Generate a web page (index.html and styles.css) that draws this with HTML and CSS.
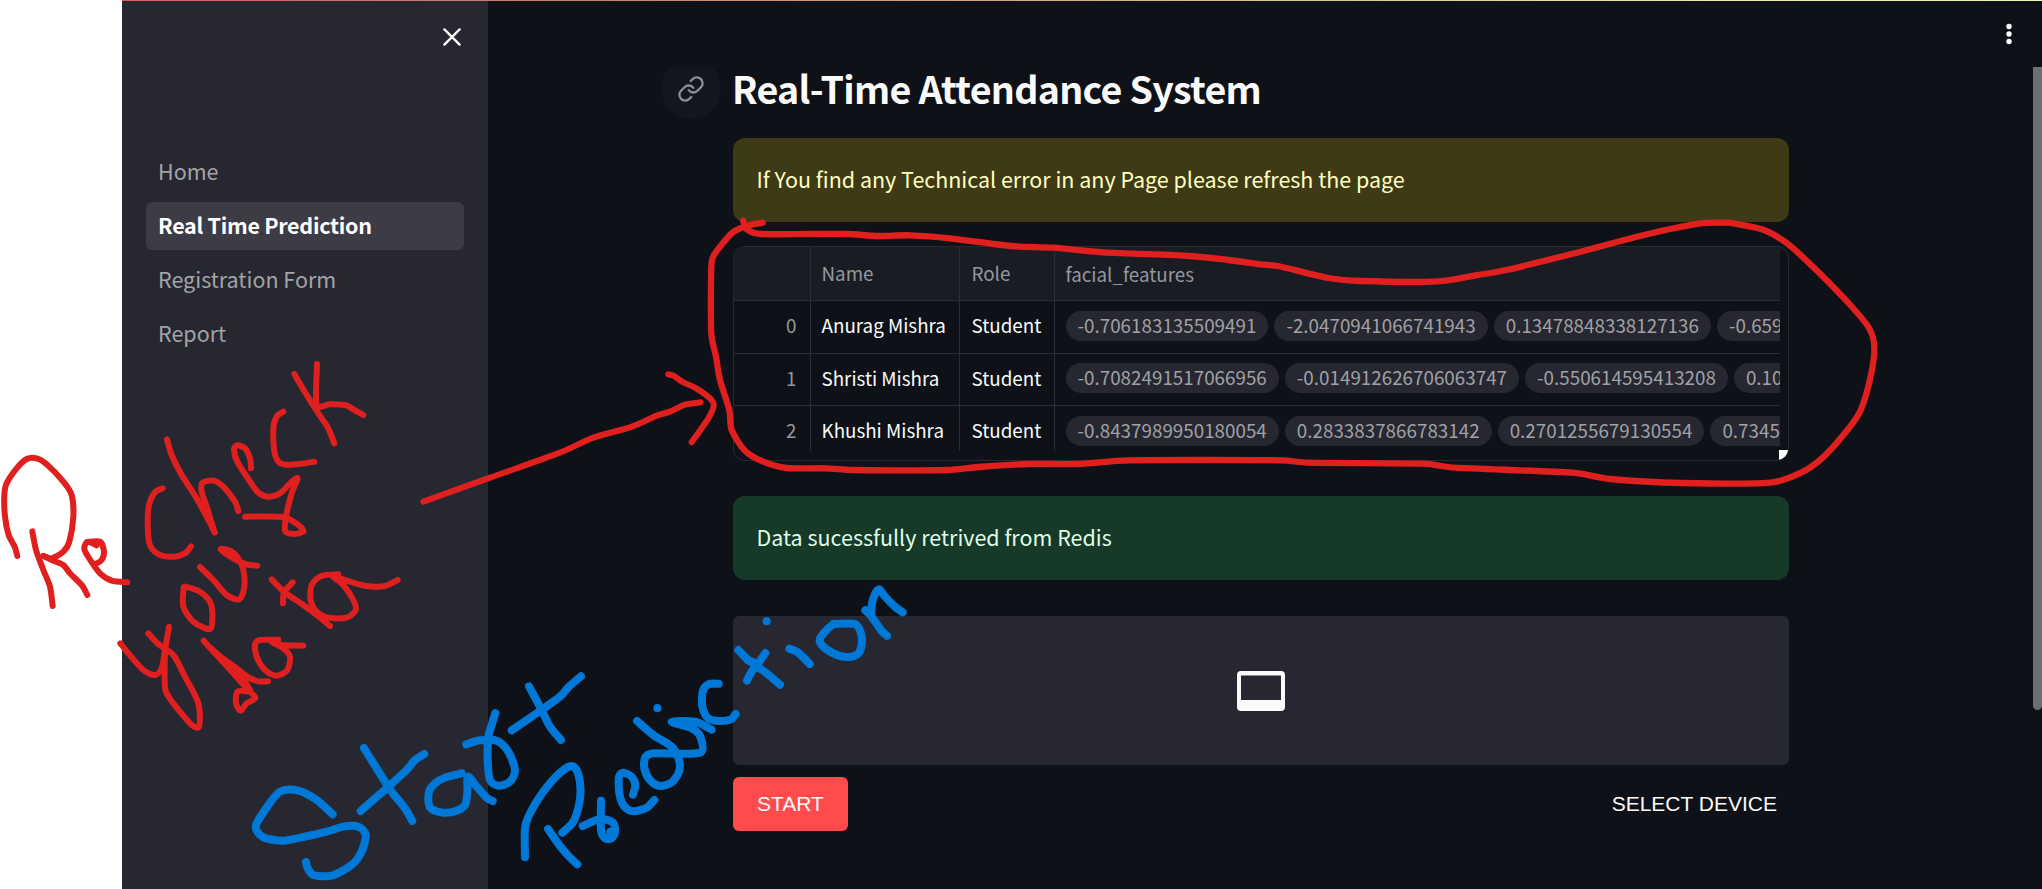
FILE: index.html
```html
<!DOCTYPE html>
<html lang="en">
<head>
<meta charset="utf-8">
<title>Real-Time Attendance System</title>
<link rel="stylesheet" href="styles.css">
</head>
<body>
<div class="page">
  <div class="gutter"></div>
  <div class="app">
    <div class="decoration"></div>
    <aside class="sidebar">
      <div class="sidebar-head">
        <svg class="close" viewBox="0 0 18 18"><path d="M1.4 1.4 16.6 16.6M16.6 1.4 1.4 16.6"/></svg>
      </div>
      <nav class="nav">
        <a class="nav-item">Home</a>
        <a class="nav-item active">Real Time Prediction</a>
        <a class="nav-item">Registration Form</a>
        <a class="nav-item">Report</a>
      </nav>
    </aside>
    <main class="main">
      <header class="topbar">
        <svg class="menu" viewBox="0 0 8 22"><circle cx="4" cy="3.5" r="2.7"/><circle cx="4" cy="11" r="2.7"/><circle cx="4" cy="18.5" r="2.7"/></svg>
      </header>
      <div class="scroll">
        <div class="content">
          <div class="title-row">
            <span class="anchor"><svg viewBox="0 0 24 24"><path d="M10 13a5 5 0 0 0 7.54.54l3-3a5 5 0 0 0-7.07-7.07l-1.72 1.71"/><path d="M14 11a5 5 0 0 0-7.54-.54l-3 3a5 5 0 0 0 7.07 7.07l1.71-1.71"/></svg></span>
            <h1 class="title">Real-Time Attendance System</h1>
          </div>
          <div class="alert warning"><span class="alert-text">If You find any Technical error in any Page please refresh the page</span></div>
          <div class="frame">
            <div class="grid">
              <div class="row head"><span class="idx"></span><span class="name">Name</span><span class="role">Role</span><span class="feat">facial_features</span></div>
              <div class="row"><span class="idx">0</span><span class="name">Anurag Mishra</span><span class="role">Student</span><span class="feat"><b class="pill">-0.706183135509491</b><b class="pill">-2.0470941066741943</b><b class="pill">0.13478848338127136</b><b class="pill">-0.659</b></span></div>
              <div class="row"><span class="idx">1</span><span class="name">Shristi Mishra</span><span class="role">Student</span><span class="feat"><b class="pill">-0.7082491517066956</b><b class="pill">-0.014912626706063747</b><b class="pill">-0.550614595413208</b><b class="pill">0.10</b></span></div>
              <div class="row last"><span class="idx">2</span><span class="name">Khushi Mishra</span><span class="role">Student</span><span class="feat"><b class="pill">-0.8437989950180054</b><b class="pill">0.2833837866783142</b><b class="pill">0.2701255679130554</b><b class="pill">0.7345</b></span></div>
            </div>
            <span class="corner"></span>
          </div>
          <div class="alert success"><span class="alert-text">Data sucessfully retrived from Redis</span></div>
          <div class="video">
            <svg class="screen" viewBox="0 0 48 40"><path fill-rule="evenodd" d="M4 0H44a4 4 0 0 1 4 4V36a4 4 0 0 1-4 4H4a4 4 0 0 1-4-4V4a4 4 0 0 1 4-4ZM4 4.5V29H44V4.5Z"/></svg>
          </div>
          <div class="actions">
            <button class="btn start">START</button>
            <button class="btn device">SELECT DEVICE</button>
          </div>
        </div>
        <div class="thumb"></div>
      </div>
    </main>
  </div>
  <svg class="ink" viewBox="0 0 2042 889">
    <g class="red lasso">
      <path data-p="743.3,220.7 746.7,229.3 760,234 810,234 846.4,234 878.6,236 910.7,235.3 950,238.3 1010.7,246 1053.6,247.7 1103.6,252.3 1189.3,256 1228.6,260 1260,264.3 1277.9,266 1328.4,278 1362,281 1437.8,281.3 1475.7,275.3 1505.2,270.3 1576.7,252.7 1644,235 1698.8,223.7 1724,222.7 1736.6,224 1764,230 1787,243.3 1814.5,268.3 1850.3,305 1869.2,328.3 1874.3,346.7 1871.3,373.3 1860.8,410 1846,431.7 1823,457.3 1801,472.7 1770.3,482.7 1682,483 1610.4,479 1572.5,472.7 1454.6,467.7 1423,463.7 1307.3,462.7 1282,460.3 1128.6,460.3 1078.6,464 1028.6,464 978.6,467 946.4,470 853.6,470 825,468.3 786.7,468 763.3,461.7 745,450.7 731.7,430 729.3,410 720,380 716,356.7 711.3,333.3 711.3,266.7 714,255 731.7,233.3 746.7,226 762.7,222.7"/>
    </g>
    <g class="red" transform="translate(410 210) scale(.33333)">
      <path data-p="40,875 240,803 450,728 550,683 660,652 740,617 780,605 825,584 872,577"/>
      <path data-p="775,493 790,497 820,517 860,536 903,568 911,588 895,625 845,697"/>
    </g>
    <g class="red" transform="translate(0 340) scale(.33333)">
      <path data-p="52,648 44,620 26,585 15,530 13,465 20,430 50,385 80,357 110,355 140,373 190,425 215,465 220,530 208,605 190,635 155,655 130,648"/>
      <path data-p="97,574 108,630 130,690 150,740 158,798"/>
      <path data-p="130,648 160,662 190,675 210,700 245,735 262,765"/>
      <path data-p="290,616 262,606 253,628 272,662 300,700 335,722 382,727"/>
      <path data-p="262,606 300,605 312,635 305,660 290,670"/>
      <path data-p="488,445 465,457 446,500 444,580 452,620 480,645 525,650 555,640 573,619"/>
      <path data-p="501,298 515,345 545,405 590,475 620,530 644,577"/>
      <path data-p="644,577 620,500 605,455 608,428 640,422 670,440 705,485 715,513"/>
      <path data-p="753,385 750,355 735,325 712,316 702,328 712,365 750,425 775,458 805,470 840,460 875,425 893,415 875,460 860,520 855,572 880,582 910,575 895,555 850,531 735,530"/>
      <path data-p="850,215 830,230 820,265 823,335 835,365 855,374 900,372 943,365"/>
      <path data-p="883,102 920,165 965,235 985,265 1003,310"/>
      <path data-p="951,72 950,195 990,193 1035,195 1060,208 1090,225"/>
      <path data-p="361,910 385,940 430,990 465,1005 485,985 495,930 507,860"/>
      <path data-p="445,880 475,912 520,945 555,1010 595,1090 597,1160 570,1150 500,1060 494,1000 495,930"/>
      <path data-p="551,742 550,800 580,845 628,868 637,840 632,790 600,755 555,740"/>
      <path data-p="600,681 640,720 680,765 718,778 733,740 730,690 715,655 690,632 662,628 700,655 740,673 772,677"/>
      <path data-p="611,902 650,945 700,1000 745,1050 766,1074 740,1090 722,1112 708,1090 713,1055 750,1055"/>
      <path data-p="640,935 700,978 745,1012 775,1024 804,1024"/>
      <path data-p="625,918 680,968 725,1010 750,1050"/>
      <path data-p="835,899 780,900 765,912 770,950 795,990 830,1007 862,990 870,950 850,925 815,906 845,915 910,917"/>
      <path data-p="815,718 855,758 910,795 950,825 990,858"/>
      <path data-p="849,790 852,757 878,727"/>
      <path data-p="1015,703 965,707 935,735 932,780 950,815 985,833 1040,833 1067,810 1060,780 1030,735 1000,710 1050,725 1100,738 1155,738 1193,720"/>
    </g>
    <g class="blue" transform="translate(230 560) scale(.33333)">
      <path data-p="308,763 260,720 205,692 150,695 105,750 77,800 100,832 160,842 215,832 290,815 340,800 385,800 407,825 395,875 365,915 305,947 250,945 233,925 228,906"/>
      <path data-p="402,564 440,625 485,695 525,745 547,783"/>
      <path data-p="392,753 475,680 530,630 555,600 583,582"/>
      <path data-p="695,640 640,655 605,680 595,710 602,745 640,758 680,752 705,735 712,700 714,650 740,680 770,713 788,723"/>
      <path data-p="709,553 750,541 800,542 835,575 855,630 840,665 805,677 780,660 773,600 775,530 785,495 796,459"/>
      <path data-p="897,379 935,450 960,500 993,540"/>
      <path data-p="845,511 930,453 990,410 1015,382 1053,349"/>
    </g>
    <g class="blue" transform="translate(500 570) scale(.33333)">
      <path data-p="75,862 75,775 90,730 130,665 180,608 215,588 232,605 241,650 238,700 220,755 187,788"/>
      <path data-p="144,777 180,828 205,857 232,883"/>
      <path data-p="248,768 300,747 338,757 345,785 335,805 315,805 303,780 303,692"/>
      <path data-p="331,787 331,785"/>
      <path data-p="399,674 406,645 395,620 370,608 357,620 358,670 372,708 400,724 440,713 463,690"/>
      <path data-p="411,453 460,495 515,530 537,570 537,605 515,637 480,648 450,630 433,595 436,562 460,550 600,548 601,500 575,475 515,455 585,455 635,479"/>
      <path data-p="472,414 472,415"/>
      <path data-p="656,341 625,343 608,365 607,410 625,445 660,453 693,448 707,432"/>
      <path data-p="715,240 745,270 800,310 840,344"/>
      <path data-p="796,249 775,280 755,305 741,332"/>
      <path data-p="745,272 760,276"/>
      <path data-p="800,153 800,154"/>
      <path data-p="868,236 890,245 915,267 929,282"/>
      <path data-p="1000,162 1065,162 1083,190 1085,225 1072,253 1040,261 1000,250 965,225 960,205 980,180 1000,162"/>
      <path data-p="1096,121 1115,140 1145,183 1161,197"/>
      <path data-p="1114,135 1116,100 1126,70 1138,58 1155,80 1185,110 1208,127"/>
    </g>
  </svg>
</div>
<script src="ink.js"></script>
</body>
</html>
```
FILE: styles.css
```css
* { box-sizing: border-box; }
body { margin: 0; background: #fff; font-family: "Noto Sans CJK SC", "Noto Sans", sans-serif; }
.page { position: relative; display: flex; width: 2042px; height: 889px; overflow: hidden; }
.gutter { width: 122px; flex: none; background: #fff; }
.app { position: relative; display: flex; flex: 1; background: #0e1117; }
.decoration { position: absolute; top: 0; left: 0; right: 0; height: 1px; background: linear-gradient(90deg, #d2626a, #c98a70 30%, #e8e8a0 80%, #f4f6b8); }
.sidebar { width: 366px; flex: none; background: #262730; }
.sidebar-head { display: flex; justify-content: flex-end; height: 148px; padding: 28px 27px 0 0; }
.close { width: 18px; height: 18px; fill: none; stroke: #fafafa; stroke-width: 2.4; stroke-linecap: round; }
.nav { display: flex; flex-direction: column; gap: 6px; padding: 0 24px; }
.nav-item { height: 48px; padding: 0 12px; border-radius: 6px; font-size: 21.5px; line-height: 45px; color: #a3a4a8; white-space: nowrap; }
.nav-item.active { background: #3c3b46; color: #fff; font-weight: 700; letter-spacing: -0.28px; }
.main { display: flex; flex-direction: column; flex: 1; min-width: 0; }
.topbar { display: flex; justify-content: flex-end; flex: none; height: 67px; padding: 23px 29px 0 0; }
.menu { width: 8px; height: 22px; fill: #fff; }
.scroll { display: flex; justify-content: space-between; flex: 1; overflow: hidden; }
.content { width: 1056px; margin-left: 245px; }
.thumb { width: 9px; height: 643px; background: #6d6e72; border-radius: 0 0 5px 5px; }
.title-row { position: relative; height: 71px; }
.anchor { position: absolute; left: -72px; top: -8px; display: flex; align-items: center; justify-content: center; width: 60px; height: 60px; border-radius: 50%; background: #12161e; }
.anchor svg { width: 28px; height: 28px; fill: none; stroke: #8e9096; stroke-width: 2; stroke-linecap: round; stroke-linejoin: round; }
.title { margin: 0 0 0 -1px; font-size: 37.6px; line-height: 42px; font-weight: 700; letter-spacing: -0.72px; color: #fafafa; white-space: nowrap; }
.alert { display: flex; height: 84px; padding: 0 23.5px; border-radius: 12px; font-size: 21.48px; line-height: 81px; white-space: nowrap; }
.warning { margin-bottom: 24px; background: #3e3a16; color: #ffffc2; }
.success { margin-bottom: 36px; background: #173928; color: #dffde9; }
.frame { position: relative; height: 215px; margin-bottom: 35px; border: 1px solid #26292f; border-radius: 12px; overflow: hidden; }
.grid { width: 1046px; height: 204px; overflow: hidden; font-size: 18.8px; }
.row { display: flex; height: 52.5px; border-bottom: 1.5px solid #2c2e35; line-height: 48px; color: #fafafa; white-space: nowrap; }
.row.head { height: 54px; background: #1a1c24; line-height: 51px; }
.row.head span { color: #96979b; }
.row.last { border-bottom: 0; }
.idx { width: 76.5px; flex: none; padding-right: 13px; border-right: 1.5px solid #2c2e35; text-align: right; color: #96979b; }
.name { width: 149.5px; flex: none; padding-left: 11px; border-right: 1.5px solid #2c2e35; }
.role { width: 95px; flex: none; padding-left: 11.5px; border-right: 1.5px solid #2c2e35; }
.feat { display: flex; align-items: center; gap: 6px; padding-left: 10.5px; }
.row:not(.head) .feat { height: 49px; }
.pill { flex: none; height: 30px; padding: 0 12px; border-radius: 15px; background: #262730; color: #a0a1a5; font-weight: 400; line-height: 28px; letter-spacing: 0.02px; }
.corner { position: absolute; right: 0; bottom: 0; width: 9px; height: 10px; background: #fff; }
.video { display: flex; align-items: center; justify-content: center; height: 149px; margin-bottom: 12px; border-radius: 6px; background: #262730; }
.screen { width: 48px; height: 40px; fill: #fafafa; }
.actions { display: flex; justify-content: space-between; height: 54px; }
.btn { height: 54px; padding: 0; border: 0; border-radius: 6px; font: 21px/54px "Liberation Sans", Arial, sans-serif; color: #fafafa; white-space: nowrap; }
.start { width: 115px; background: #ff4b4b; }
.device { padding-right: 12px; background: none; }
.ink { position: absolute; left: 0; top: 0; width: 2042px; height: 889px; fill: none; stroke-linecap: round; stroke-linejoin: round; }
.red { stroke: #e01f1f; stroke-width: 18; }
.red.lasso { stroke-width: 6.3; }
.blue { stroke: #0078d7; stroke-width: 24; }
```
FILE: ink.js
```javascript
// Turns each stroke's sampled points into a smooth cubic path.
document.querySelectorAll('.ink path').forEach(function (path) {
  var p = path.dataset.p.split(' ').map(function (s) { return s.split(',').map(Number); });
  var k = 7, d = 'M' + p[0];
  for (var i = 0; i < p.length - 1; i++) {
    var a = p[i - 1] || p[i], b = p[i], c = p[i + 1], e = p[i + 2] || c;
    // handles are capped by the segment length so uneven sampling does not overshoot
    var seg = Math.hypot(c[0] - b[0], c[1] - b[1]);
    var h = function (u, v) {
      var x = (v[0] - u[0]) / k, y = (v[1] - u[1]) / k, l = Math.hypot(x, y) || 1;
      var s = Math.min(1, seg * 0.35 / l);
      return [x * s, y * s];
    };
    var m = h(a, c), n = h(b, e);
    d += 'C' + [b[0] + m[0], b[1] + m[1], c[0] - n[0], c[1] - n[1], c[0], c[1]];
  }
  path.setAttribute('d', d);
});
```
